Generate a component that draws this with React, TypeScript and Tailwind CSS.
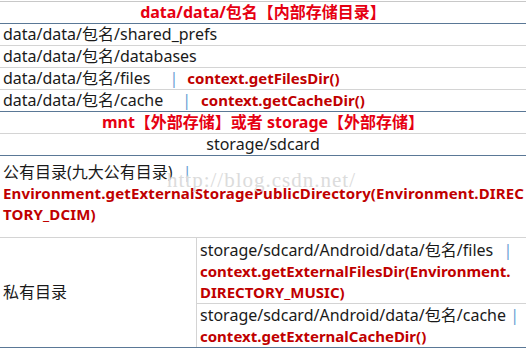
const font = "font-['Noto_Sans','Noto_Sans_CJK_SC',sans-serif]";

function Pipe({ className = '' }: { className?: string }) {
  return <span className={`text-[#6a9fd4] font-normal ${className}`}>|</span>;
}

function Code({ children, className = '' }: { children: React.ReactNode; className?: string }) {
  return <span className={`font-bold text-[15px] text-[#c00000] ${className}`}>{children}</span>;
}

export default function App() {
  return (
    <div className={`relative w-[526px] h-[349px] bg-white pt-px text-[16px] leading-[21px] text-[#1a1a1a] ${font}`}>
      <div className="border-t border-[#c8c8c8]">
        {/* internal storage */}
        <div className="h-[22px] border-b border-[#5a7896] text-center font-bold text-[#e60012]">
          data/data/包名【内部存储目录】
        </div>
        <div className="h-[22px] border-b border-[#d4d4d4] pl-[3px]">data/data/包名/shared_prefs</div>
        <div className="h-[22px] border-b border-[#d4d4d4] pl-[3px]">data/data/包名/databases</div>
        <div className="flex h-[22px] items-baseline border-b border-[#d4d4d4] pl-[3px]">
          <span>data/data/包名/files</span>
          <Pipe className="ml-[19px]" />
          <Code className="ml-[9px]">context.getFilesDir()</Code>
        </div>
        <div className="flex h-[22px] items-baseline border-b border-[#5a7896] pl-[3px]">
          <span>data/data/包名/cache</span>
          <Pipe className="ml-[19px]" />
          <Code className="ml-[10px]">context.getCacheDir()</Code>
        </div>

        {/* external storage */}
        <div className="h-[22px] border-b border-[#d4d4d4] text-center font-bold text-[#e60012]">
          mnt【外部存储】或者 storage【外部存储】
        </div>
        <div className="h-[22px] border-b border-[#5a7896] text-center">storage/sdcard</div>

        <div className="h-[82px] border-b border-[#d4d4d4] px-[3px] pt-[6px]">
          <div>
            公有目录(九大公有目录) <Pipe className="ml-[6px]" />
          </div>
          <Code className="block whitespace-nowrap tracking-[0.15px]">
            Environment.getExternalStoragePublicDirectory(Environment.DIREC
            <br />
            TORY_DCIM)
          </Code>
        </div>

        <div className="flex h-[110px] border-b border-[#5a7896]">
          <div className="flex w-[197px] shrink-0 items-center border-r border-[#d4d4d4] pl-[3px]">私有目录</div>
          <div className="flex flex-1 flex-col">
            <div className="h-[66px] border-b border-[#d4d4d4] pl-[3px] pt-[2px]">
              <div className="whitespace-nowrap">
                storage/sdcard/Android/data/包名/files <Pipe className="ml-[6px]" />
              </div>
              <Code className="block whitespace-nowrap">
                context.getExternalFilesDir(Environment.
                <br />
                DIRECTORY_MUSIC)
              </Code>
            </div>
            <div className="flex-1 pl-[3px] pt-[1px]">
              <div className="whitespace-nowrap">
                storage/sdcard/Android/data/包名/cache <Pipe />
              </div>
              <Code className="block">context.getExternalCacheDir()</Code>
            </div>
          </div>
        </div>
      </div>

      {/* watermark */}
      <div className="pointer-events-none absolute left-[167px] top-[170px] font-['Liberation_Serif',serif] text-[21px] leading-none tracking-[1px] text-[#dcdcdc]">
        http://blog.csdn.net/
      </div>
    </div>
  );
}
